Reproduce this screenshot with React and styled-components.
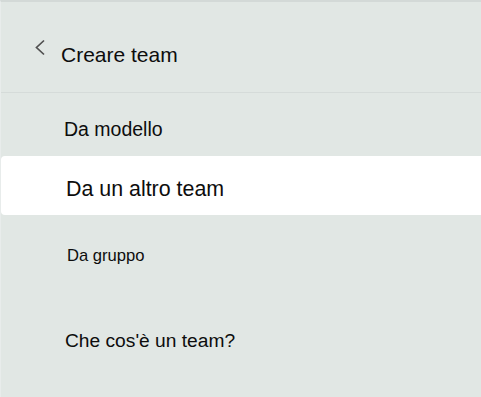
import React from 'react';
import styled, { createGlobalStyle } from 'styled-components';

const GlobalStyle = createGlobalStyle`
  html, body {
    margin: 0;
    padding: 0;
    background: #e1e7e4;
  }
  body {
    font-family: "Liberation Sans", Arial, sans-serif;
    color: #0d0d0d;
  }
`;

const Panel = styled.div`
  width: 481px;
  height: 397px;
  box-sizing: border-box;
  background: #e1e7e4;
  border-top: 2px solid #d3d9d7;
  border-left: 1px solid #e8eceb;
  overflow: hidden;
`;

const Header = styled.div`
  display: flex;
  align-items: flex-start;
  height: 91px;
  padding-left: 32px;
  border-bottom: 1px solid #d5dbd9;
  box-sizing: border-box;
`;

const BackButton = styled.span`
  display: flex;
  width: 28px;
  margin-top: 36px;
`;

const Title = styled.h1`
  margin: 41px 0 0;
  font-size: 21px;
  line-height: 24px;
  font-weight: 400;
`;

const List = styled.div`
  display: flex;
  flex-direction: column;
`;

const Option = styled.div`
  display: flex;
  align-items: center;
  box-sizing: border-box;
  height: ${p => p.$h}px;
  padding-top: ${p => p.$shift || 0}px;
  padding-left: ${p => p.$indent}px;
  font-size: ${p => p.$size}px;
  background: ${p => (p.$active ? '#ffffff' : 'transparent')};
  border-radius: ${p => (p.$active ? '4px 0 0 4px' : '0')};
`;

const HelpLink = styled(Option)`
  margin-top: 34px;
`;

export default function App() {
  return (
    <>
      <GlobalStyle />
      <Panel>
        <Header>
          <BackButton>
            <svg width="14" height="19" viewBox="0 0 14 19">
              <path d="M11 2.5 L3.5 9.5 L11 16.5" fill="none" stroke="#505050" strokeWidth="1.7" />
            </svg>
          </BackButton>
          <Title>Creare team</Title>
        </Header>
        <List>
          <Option $h={63} $shift={9} $indent={63} $size={19.5}>Da modello</Option>
          <Option $h={59} $shift={7} $indent={65} $size={21.4} $active>Da un altro team</Option>
          <Option $h={80} $shift={2} $indent={66} $size={16.6}>Da gruppo</Option>
          <HelpLink $h={24} $indent={64} $size={19.2}>Che cos'è un team?</HelpLink>
        </List>
      </Panel>
    </>
  );
}
